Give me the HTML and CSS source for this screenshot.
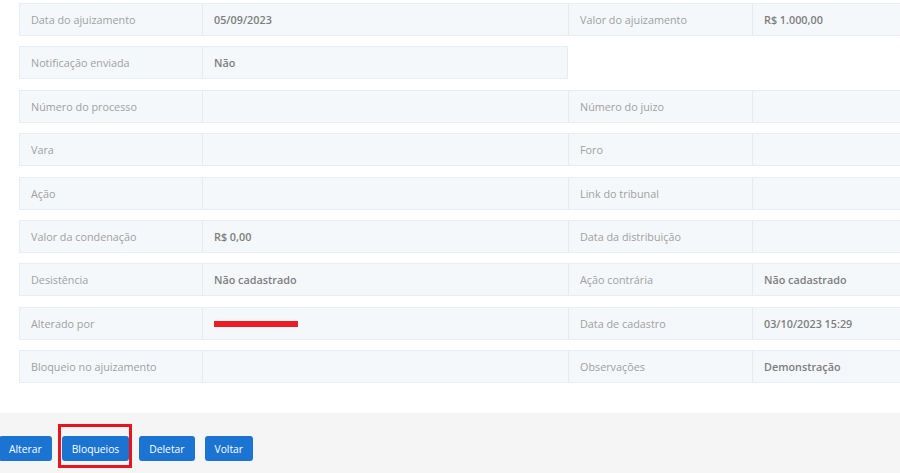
FILE: index.html
```html
<!DOCTYPE html>
<html lang="pt-BR">
<head>
<meta charset="utf-8">
<title>Ajuizamento</title>
<link rel="stylesheet" href="styles.css">
</head>
<body>
<div class="page">
  <div class="details">
    <div class="row">
      <div class="label">Data do ajuizamento</div><div class="value">05/09/2023</div>
      <div class="label">Valor do ajuizamento</div><div class="value">R$ 1.000,00</div>
    </div>
    <div class="row half">
      <div class="label">Notificação enviada</div><div class="value">Não</div>
    </div>
    <div class="row">
      <div class="label">Número do processo</div><div class="value"></div>
      <div class="label">Número do juizo</div><div class="value"></div>
    </div>
    <div class="row">
      <div class="label">Vara</div><div class="value"></div>
      <div class="label">Foro</div><div class="value"></div>
    </div>
    <div class="row">
      <div class="label">Ação</div><div class="value"></div>
      <div class="label">Link do tribunal</div><div class="value"></div>
    </div>
    <div class="row">
      <div class="label">Valor da condenação</div><div class="value">R$ 0,00</div>
      <div class="label">Data da distribuição</div><div class="value"></div>
    </div>
    <div class="row">
      <div class="label">Desistência</div><div class="value">Não cadastrado</div>
      <div class="label">Ação contrária</div><div class="value">Não cadastrado</div>
    </div>
    <div class="row">
      <div class="label">Alterado por</div><div class="value"><span class="redact"></span></div>
      <div class="label">Data de cadastro</div><div class="value">03/10/2023 15:29</div>
    </div>
    <div class="row">
      <div class="label">Bloqueio no ajuizamento</div><div class="value"></div>
      <div class="label">Observações</div><div class="value">Demonstração</div>
    </div>
  </div>
  <div class="actions">
    <button class="btn">Alterar</button>
    <button class="btn marked">Bloqueios<span class="mark"></span></button>
    <button class="btn">Deletar</button>
    <button class="btn">Voltar</button>
  </div>
</div>
</body>
</html>
```

FILE: styles.css
```css
html, body {
  margin: 0;
  padding: 0;
  background: #ffffff;
  overflow: hidden;
}
body {
  font-family: "Open Sans", "Liberation Sans", sans-serif;
  font-size: 10.8px;
  width: 900px;
  height: 473px;
}
.page {
  display: flex;
  flex-direction: column;
  height: 473px;
  overflow: hidden;
}
.details {
  display: flex;
  flex-direction: column;
  gap: 10.4px;
  padding: 3px 0 0 19px;
  width: 1098px;
}
.row {
  display: grid;
  grid-template-columns: 183px 366px 184px 365px;
  height: 33px;
  box-sizing: border-box;
  border: 1px solid #e8edf2;
  background: #f5f8fb;
}
.row.half {
  grid-template-columns: 183px 365px;
  width: 549px;
}
.label, .value {
  display: flex;
  align-items: center;
  padding-left: 11px;
  color: #a0a0a0;
  border-right: 1px solid #e6ebf0;
  white-space: nowrap;
}
.value {
  font-weight: 600;
  color: #7d7d7d;
}
.row > :last-child { border-right: none; }
.redact {
  display: block;
  width: 84px;
  height: 6px;
  background: #ee1c25;
  margin-top: 1px;
}
.actions {
  margin-top: 30px;
  flex: 1;
  background: #f5f5f5;
  display: flex;
  align-items: flex-start;
  gap: 10px;
  padding: 23px 0 0 0;
  margin-left: -1px;
}
.btn {
  position: relative;
  height: 25px;
  padding: 0 10px;
  border: none;
  border-radius: 3px;
  background: #1b74d2;
  color: #ffffff;
  font-family: "Open Sans", "Liberation Sans", sans-serif;
  font-size: 10.3px;
  font-weight: 500;
}
.mark {
  position: absolute;
  left: -4px;
  top: -12px;
  right: -3px;
  bottom: -7px;
  border: 3px solid #e8151f;
}
```
